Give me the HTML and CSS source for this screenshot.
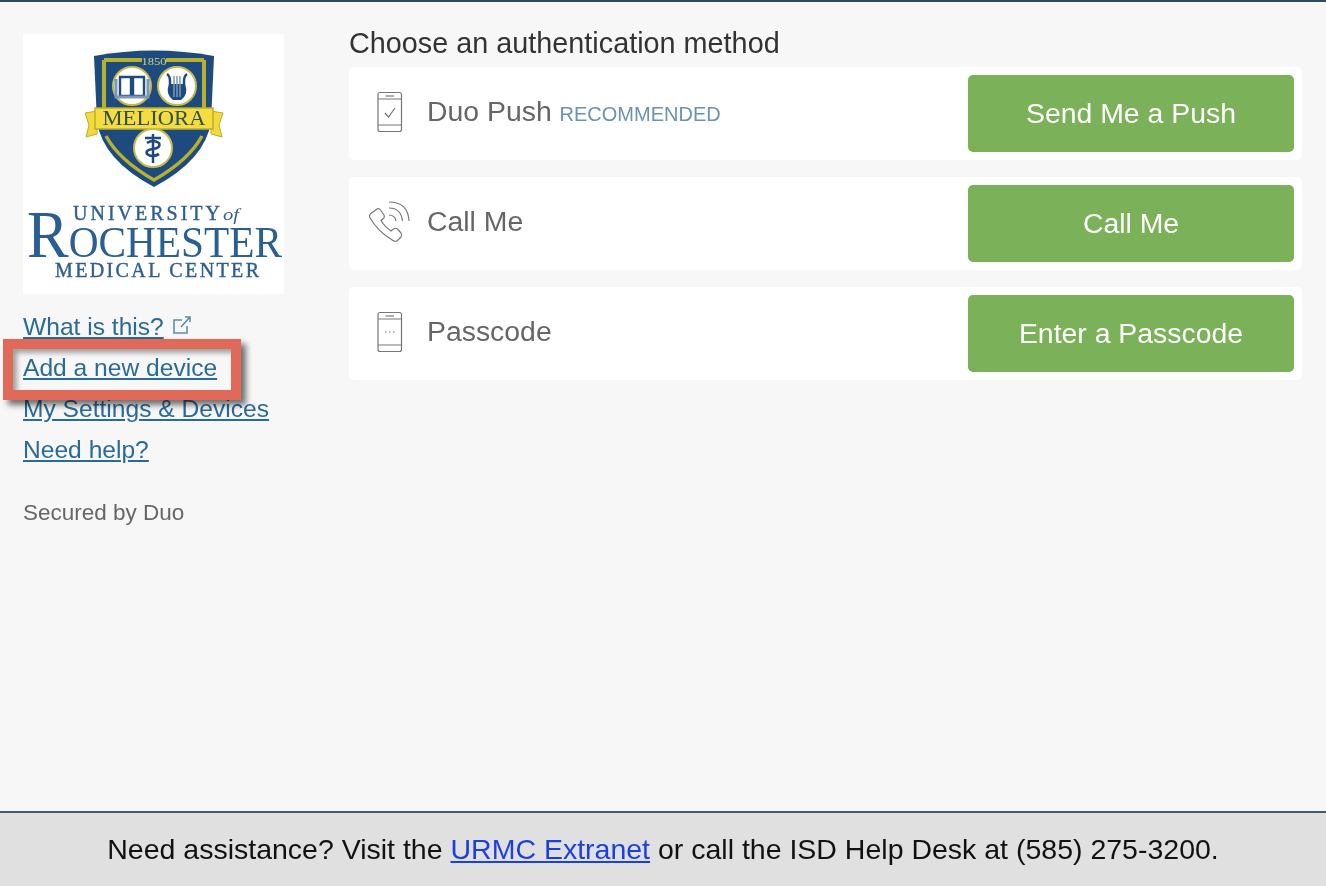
FILE: index.html
```html
<!DOCTYPE html>
<html lang="en">
<head>
    <meta charset="UTF-8">
    <meta name="viewport" content="width=device-width, initial-scale=1.0">
    <title>Choose an authentication method</title>
    <link rel="stylesheet" href="styles.css">
</head>
<body>
<div class="page">
    <div class="main">
        <div class="sidebar">
            <div class="logo">
                <svg class="logo-art" viewBox="0 0 261 260" width="261" height="260">
                    <!-- crest -->
                    <path d="M71 22 Q131 11 191 22 L188 88 Q182 126 131 153 Q80 126 74 88 Z" fill="#1d4b80"/>
                    <path d="M81 26 H119 M143 26 H181 M81 26 V74 M181 26 V74" fill="none" stroke="#b9b02c" stroke-width="4"/>
                    <path d="M83 102 Q96 126 131 146 Q166 126 179 102" fill="none" stroke="#b9b02c" stroke-width="3.5"/>
                    <text class="crest-year" x="131" y="31" text-anchor="middle" textLength="25" lengthAdjust="spacingAndGlyphs">1850</text>

                    <circle cx="109" cy="52" r="19" fill="#fff" stroke="#c4bb4a" stroke-width="2"/>
                    <path d="M97 43 H108 V62 H97 Z M110 43 H121 V62 H110 Z" fill="#fff" stroke="#1d4b80" stroke-width="2.4"/>
                    <path d="M93 45 V63 H125 V45" fill="none" stroke="#7c98b8" stroke-width="3"/>

                    <circle cx="154" cy="52" r="19" fill="#fff" stroke="#c4bb4a" stroke-width="2"/>
                    <path d="M144 40 Q147 42 147 47 V54 M164 40 Q161 42 161 47 V54" fill="none" stroke="#1d4b80" stroke-width="2.5"/>
                    <path d="M146 50 H162 Q166 60 158 66 H150 Q142 60 146 50 Z" fill="#1d4b80"/>
                    <path d="M151 42 V63 M154 42 V63 M157 42 V63" stroke="#7c98b8" stroke-width="1.5"/>

                    <path d="M62 79 L74 77 V100 L63 103 L66 91 Z M200 79 L188 77 V100 L199 103 L196 91 Z" fill="#f4d93e" stroke="#b9b02c"/>
                    <rect x="72" y="74" width="118" height="21" fill="#f7dc3f" stroke="#b9b02c" stroke-width="1.5"/>
                    <text class="crest-motto" x="131" y="91" text-anchor="middle" textLength="103" lengthAdjust="spacingAndGlyphs">MELIORA</text>

                    <circle cx="130" cy="114" r="19" fill="#fff" stroke="#c4bb4a" stroke-width="2"/>
                    <path d="M130 100 V129" stroke="#1d4b80" stroke-width="2.5"/>
                    <path d="M122 104 H138 M124 109 Q130 105 136 109 Q138 114 130 115 Q122 116 124 120 Q129 124 136 120" fill="none" stroke="#1d4b80" stroke-width="2.6"/>

                    <!-- wordmark -->
                    <text class="word-small" x="50" y="186" textLength="147" lengthAdjust="spacing">UNIVERSITY</text>
                    <text class="word-of" x="200" y="186" textLength="16" lengthAdjust="spacingAndGlyphs">of</text>
                    <text class="word-big" x="4" y="223" textLength="255" lengthAdjust="spacingAndGlyphs"><tspan class="word-cap">R</tspan>OCHESTER</text>
                    <text class="word-small" x="32" y="243" textLength="204" lengthAdjust="spacing">MEDICAL CENTER</text>
                </svg>
            </div>
            <div class="side-links">
                <a class="side-link" href="#">What is this?</a><svg class="ext-icon" viewBox="0 0 20 20" width="20" height="20"><path d="M10 5 H2 V18 H15 V11 M9 12 L18 2 M13 2 H18 V7" fill="none" stroke="#5e8cab" stroke-width="1.6"/></svg>
                <br>
                <a class="side-link" href="#">Add a new device</a><br>
                <a class="side-link" href="#">My Settings &amp; Devices</a><br>
                <a class="side-link" href="#">Need help?</a>
            </div>
            <div class="secured">Secured by Duo</div>
        </div>

        <div class="methods">
            <div class="methods-title">Choose an authentication method</div>

            <div class="method-row">
                <svg class="method-icon" viewBox="0 0 42 42" width="42" height="42">
                    <rect x="10" y="1.5" width="23.5" height="39" rx="2" class="icon-line"/>
                    <path d="M10 8 H33.5 M10 34 H33.5" class="icon-line"/>
                    <path d="M17.5 5 H26" class="icon-line"/>
                    <path d="M17 22 L20.5 26 L27 17" class="icon-line"/>
                </svg>
                <div class="method-label method-label-first">Duo Push <span class="recommended">RECOMMENDED</span></div>
                <button class="method-btn">Send Me a Push</button>
            </div>

            <div class="method-row">
                <svg class="method-icon" viewBox="0 0 42 42" width="42" height="42">
                    <path d="M1.5 16 Q1 14 3 12.5 L9 8 Q11 7 12.5 9 L16 14 Q17 16 15.5 17.5 L13 19.5 Q16 25 23 30 L25.5 28 Q27.5 26.5 29.5 28 L33 32 Q34.5 34 33 36 L29.5 39.5 Q27.5 41 25 39.5 Q10 31 1.5 16 Z" class="icon-line"/>
                    <path d="M21 14 Q27 14 28 20 M21 7 Q33 7 34.5 20 M21 1 Q40 1 41 20" class="icon-line"/>
                </svg>
                <div class="method-label">Call Me</div>
                <button class="method-btn">Call Me</button>
            </div>

            <div class="method-row">
                <svg class="method-icon" viewBox="0 0 42 42" width="42" height="42">
                    <rect x="10" y="1.5" width="23.5" height="39" rx="2" class="icon-line"/>
                    <path d="M10 8 H33.5 M10 34 H33.5" class="icon-line"/>
                    <path d="M17.5 5 H26" class="icon-line"/>
                    <path d="M17 21 H18.5 M21 21 H22.5 M25 21 H26.5" class="icon-line"/>
                </svg>
                <div class="method-label">Passcode</div>
                <button class="method-btn">Enter a Passcode</button>
            </div>
        </div>
    </div>

    <div class="footer">
        Need assistance? Visit the <a href="#">URMC Extranet</a> or call the ISD Help Desk at (585) 275-3200.
    </div>

    <!-- annotation drawn over the screenshot -->
    <div class="callout"></div>
</div>
</body>
</html>
```

FILE: styles.css
```css
html, body {
    margin: 0;
    height: 100%;
}

body {
    font-family: 'Liberation Sans', Arial, sans-serif;
    background-color: #f7f7f7;
}

/* the source shot is an upscaled capture, hence the slight blur */
.page {
    position: relative;
    height: 886px;
    display: flex;
    flex-direction: column;
    overflow: hidden;
    border-top: 2px solid #2c4a63;
    box-sizing: border-box;
    filter: blur(0.4px);
}

.main {
    flex: 1;
    display: flex;
    padding: 0 24px 0 23px;
}

.sidebar {
    width: 261px;
    margin-right: 65px;
    padding-top: 32px;
}

.logo {
    width: 261px;
    height: 260px;
    background-color: #fff;
}

.logo-art {
    display: block;
    filter: blur(0.5px);
}

.crest-year {
    font-family: 'Liberation Serif', serif;
    font-size: 11px;
    fill: #d8d27a;
}

.crest-motto {
    font-family: 'Liberation Serif', serif;
    font-size: 21px;
    fill: #2c4f5a;
}

.word-small {
    font-family: 'Liberation Serif', serif;
    font-size: 20px;
    fill: #2f5f8f;
    stroke: #2f5f8f;
    stroke-width: 0.4;
}

.word-of {
    font-family: 'Liberation Serif', serif;
    font-style: italic;
    font-size: 17px;
    fill: #2f5f8f;
}

.word-big {
    font-family: 'Liberation Serif', serif;
    font-size: 45px;
    fill: #2a5f92;
}

.word-cap {
    font-size: 68px;
}

.side-links {
    margin-top: 12px;
    font-size: 24.6px;
    line-height: 41px;
}

.side-link {
    color: #2a6a99;
    text-decoration: underline;
}

.ext-icon {
    margin-left: 8px;
}

.secured {
    margin-top: 29px;
    font-size: 22.5px;
    line-height: 28px;
    color: #666;
}

.methods {
    flex: 1;
    padding-top: 19px;
}

.methods-title {
    font-size: 28.8px;
    line-height: 44px;
    margin-bottom: 2px;
    color: #333;
}

.method-row {
    display: flex;
    align-items: center;
    height: 93px;
    margin-bottom: 17px;
    padding: 0 8px 0 19px;
    background-color: #fff;
    border-radius: 5px;
}

.method-icon {
    flex: none;
    margin-right: 17px;
    margin-bottom: 4px;
}

.icon-line {
    fill: none;
    stroke: #777;
    stroke-width: 1.2;
}

.method-label {
    flex: 1;
    font-size: 28.4px;
    line-height: 32px;
    color: #666;
    padding-bottom: 5px;
}

.method-label-first {
    padding-bottom: 3px;
}

.recommended {
    font-size: 20px;
    color: #6b93ad;
}

.method-btn {
    width: 326px;
    height: 77px;
    padding: 0;
    border: none;
    border-radius: 5px;
    background-color: #7ab159;
    color: #fff;
    font-family: inherit;
    font-size: 28.4px;
    cursor: pointer;
}

.footer {
    height: 75px;
    box-sizing: border-box;
    border-top: 2px solid #3f5a6e;
    background-color: #e0e0e0;
    color: #111;
    font-size: 28.5px;
    line-height: 73px;
    text-align: center;
}

.footer a {
    color: #1c3fe0;
}

.callout {
    position: absolute;
    left: 3px;
    top: 337px;
    width: 238px;
    height: 61px;
    box-sizing: border-box;
    border: 10px solid #e0695a;
    box-shadow: 5px 5px 6px rgba(0, 0, 0, 0.55), inset 4px 4px 5px rgba(0, 0, 0, 0.35);
}
```
